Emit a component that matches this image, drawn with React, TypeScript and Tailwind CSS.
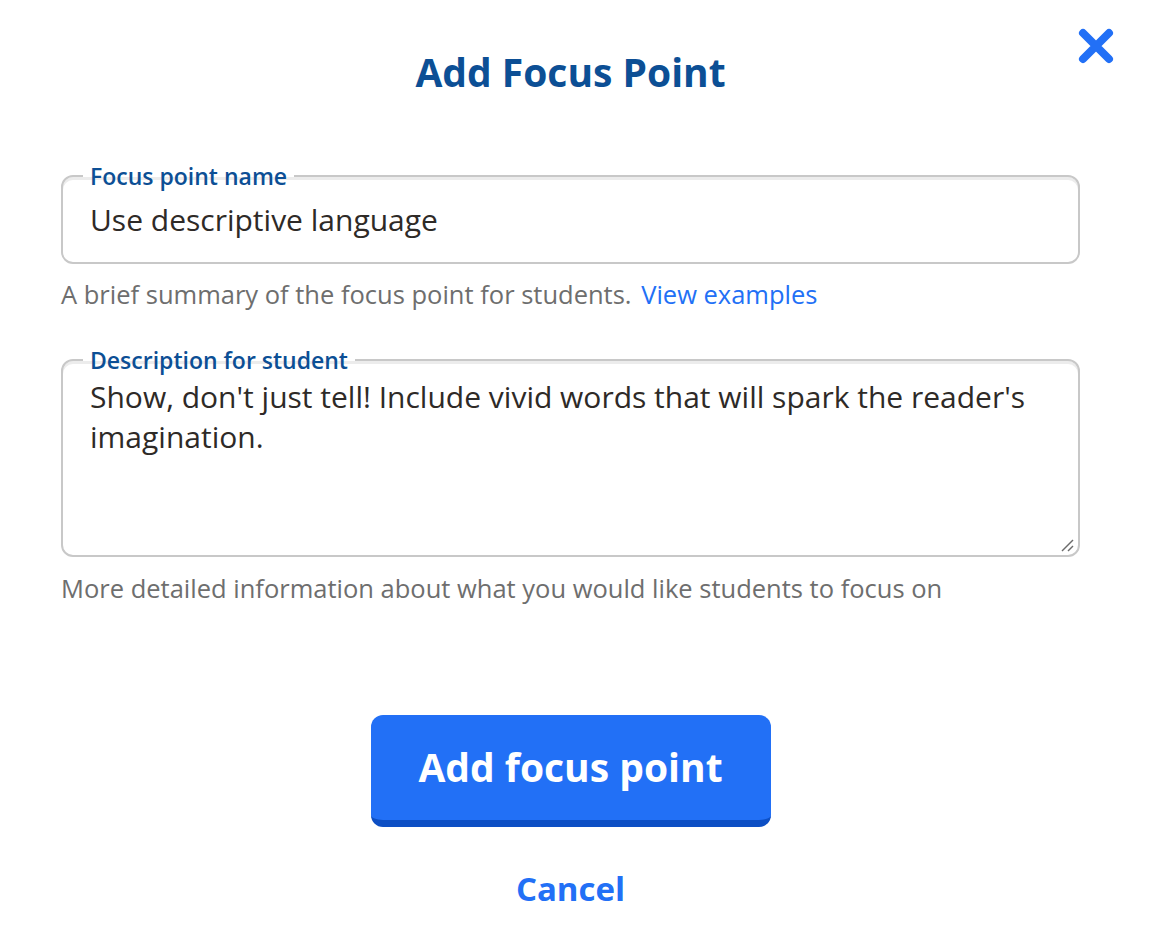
import { useState } from "react";

const font = { fontFamily: "'Open Sans', Lato, sans-serif" };

function ResizeGrip() {
  return (
    <svg
      width="14"
      height="14"
      viewBox="0 0 14 14"
      className="pointer-events-none absolute bottom-[3px] right-[4px]"
    >
      <path d="M13 2 L2 13" stroke="#6b6b6b" strokeWidth="1.5" />
      <path d="M13 8 L8 13" stroke="#6b6b6b" strokeWidth="1.5" />
    </svg>
  );
}

export default function App() {
  const [name, setName] = useState("Use descriptive language");
  const [desc, setDesc] = useState(
    "Show, don't just tell! Include vivid words that will spark the reader's imagination."
  );

  return (
    <div style={font} className="min-h-[944px] w-[1141px] bg-white text-[#2e2a27]">
      <div className="relative px-[61px] pt-[46px]">
        <button
          type="button"
          aria-label="Close"
          className="absolute right-[26px] top-[27px] flex h-[38px] w-[38px] items-center justify-center"
        >
          <svg width="38" height="38" viewBox="0 0 38 38">
            <path
              d="M6 6 L32 32 M32 6 L6 32"
              stroke="#2270f6"
              strokeWidth="8"
              strokeLinecap="round"
            />
          </svg>
        </button>

        <h1 className="text-center text-[39px] font-bold leading-[52px] text-[#0c4f95]">
          Add Focus Point
        </h1>

        <fieldset className="mt-[64px] h-[102px] rounded-[12px] border-2 border-[#c8c8c8] px-[27px] shadow-[inset_0_3px_0_#ececec]">
          <legend className="ml-[-7px] px-[7px] text-[23px] font-semibold leading-[28px] text-[#0c4f95]">
            Focus point name
          </legend>
          <input
            value={name}
            onChange={(e) => setName(e.target.value)}
            className="mt-[10px] w-full bg-transparent text-[30px] leading-[40px] text-[#2e2a27] outline-none"
          />
        </fieldset>
        <p className="mt-[15px] text-[25.5px] leading-[30px] text-[#6e6e6e]">
          A brief summary of the focus point for students.{" "}
          <a href="#" className="ml-[3px] text-[#2270f6]">
            View examples
          </a>
        </p>

        <fieldset className="relative mt-[37px] h-[211px] rounded-[12px] border-2 border-[#c8c8c8] px-[27px] shadow-[inset_0_3px_0_#ececec]">
          <legend className="ml-[-7px] px-[7px] text-[23px] font-semibold leading-[28px] text-[#0c4f95]">
            Description for student
          </legend>
          <textarea
            value={desc}
            onChange={(e) => setDesc(e.target.value)}
            className="mt-[3px] h-[170px] w-full resize-none bg-transparent text-[30px] leading-[40px] text-[#2e2a27] outline-none"
          />
          <ResizeGrip />
        </fieldset>
        <p className="mt-[16px] text-[25.5px] leading-[30px] text-[#6e6e6e]">
          More detailed information about what you would like students to focus on
        </p>

        <div className="mt-[112px] flex flex-col items-center">
          <button
            type="button"
            className="h-[112px] w-[400px] rounded-[12px] border-b-[7px] border-[#0d4fc4] bg-[#2270f6] text-[39px] font-bold text-white"
          >
            Add focus point
          </button>
          <button type="button" className="mt-[40px] text-[33px] font-bold leading-[44px] text-[#2270f6]">
            Cancel
          </button>
        </div>
      </div>
    </div>
  );
}
